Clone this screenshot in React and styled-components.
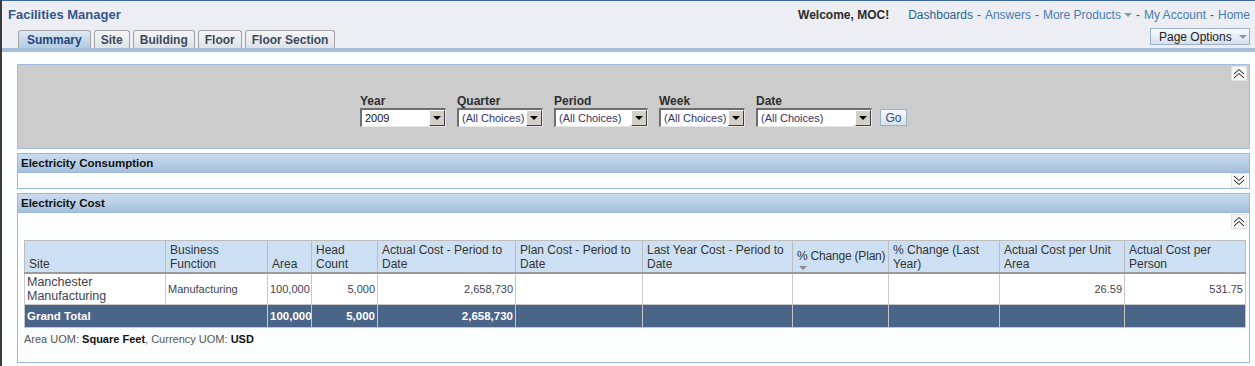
import React from "react";
import styled, { createGlobalStyle } from "styled-components";

const Global = createGlobalStyle`
  html, body { margin: 0; padding: 0; background: #fcfdfd; }
  body { font-family: "Liberation Sans", Arial, sans-serif; }
  * { box-sizing: border-box; }
`;

const Page = styled.div`
  width: 1255px;
  height: 366px;
  overflow: hidden;
  border-left: 2px solid #3c3c3c;
  background: #fcfdfd;
  display: flex;
  flex-direction: column;
`;

const Header = styled.div`
  height: 48px;
  background: #eceef3;
  border-top: 1px solid #3d6aa6;
  display: flex;
  justify-content: space-between;
  padding: 0 5px 0 6px;
`;

const HeaderLeft = styled.div`
  display: flex;
  flex-direction: column;
  justify-content: space-between;
`;

const Title = styled.div`
  font-weight: bold;
  font-size: 13px;
  color: #34558b;
  padding-top: 6px;
`;

const Tabs = styled.div`
  display: flex;
  gap: 3px;
  padding-left: 10px;
  align-items: flex-end;
`;

const Tab = styled.div`
  height: 18px;
  padding: 0 ${(p) => (p.$active ? 8 : 6)}px;
  border: 1px solid #a4a4a4;
  border-bottom: none;
  border-radius: 3px 3px 0 0;
  font-weight: bold;
  font-size: 12px;
  line-height: 18px;
  white-space: nowrap;
  color: ${(p) => (p.$active ? "#24447a" : "#3d4a5c")};
  background: ${(p) =>
    p.$active
      ? "linear-gradient(#dde8f3, #b3cbe2)"
      : "linear-gradient(#f5f6f8, #dfe2e6)"};
`;

const HeaderRight = styled.div`
  display: flex;
  flex-direction: column;
  align-items: flex-end;
  justify-content: space-between;
  padding-bottom: 3px;
  white-space: nowrap;
`;

const TopLine = styled.div`
  display: flex;
  align-items: center;
  padding-top: 7px;
  font-size: 12px;
`;

const Welcome = styled.span`
  font-weight: bold;
  font-size: 12px;
  color: #2b2b2b;
  margin-right: 19px;
`;

const Link = styled.span`
  color: ${(p) => (p.$dark ? "#2f6389" : "#4a7cae")};
`;

const Sep = styled.span`
  color: #555;
  padding: 0 4px;
`;

const Caret = styled.span`
  display: inline-block;
  width: 0;
  height: 0;
  border-left: 4px solid transparent;
  border-right: 4px solid transparent;
  border-top: 4px solid #8a99aa;
  margin-left: 3px;
`;

const PageOptions = styled.div`
  height: 17px;
  width: 100px;
  border: 1px solid #9bb0c8;
  background: linear-gradient(#fafcfe, #d3dfec);
  font-size: 12px;
  color: #222;
  padding-left: 8px;
  display: flex;
  align-items: center;
  gap: 4px;
  white-space: nowrap;
`;

const BlueBar = styled.div`
  height: 4px;
  background: #a3bfd9;
`;

const Content = styled.div`
  padding: 12px 5px 0 15px;
  display: flex;
  flex-direction: column;
  gap: 4px;
`;

const FilterPanel = styled.div`
  height: 85px;
  background: #cccccc;
  border: 1px solid #a0bddc;
  position: relative;
  display: flex;
  justify-content: center;
  align-items: flex-start;
  padding-top: 29px;
`;

const Filters = styled.div`
  display: flex;
  align-items: flex-end;
  gap: 11px;
`;

const Field = styled.div`
  display: flex;
  flex-direction: column;
`;

const Label = styled.div`
  font-weight: bold;
  font-size: 12px;
  line-height: 14px;
  color: #2e2e2e;
`;

const Select = styled.div`
  width: ${(p) => p.$w}px;
  height: 19px;
  background: #fff;
  border-top: 2px solid #6e6e6e;
  border-left: 2px solid #6e6e6e;
  border-right: 1px solid #e8e8e8;
  border-bottom: 1px solid #e8e8e8;
  display: flex;
  align-items: center;
  justify-content: space-between;
  font-size: 11px;
  white-space: nowrap;
  color: ${(p) => (p.$plain ? "#111" : "#3a3468")};
  padding-left: 3px;
`;

const DropBtn = styled.div`
  flex: none;
  width: 16px;
  height: 16px;
  background: #d4d0c8;
  border-top: 1px solid #fff;
  border-left: 1px solid #fff;
  border-right: 1px solid #404040;
  border-bottom: 1px solid #404040;
  display: flex;
  align-items: center;
  justify-content: center;
  &::after {
    content: "";
    border-left: 4px solid transparent;
    border-right: 4px solid transparent;
    border-top: 4px solid #000;
  }
`;

const GoBtn = styled.div`
  width: 27px;
  height: 17px;
  border: 1px solid #9ab0c6;
  background: linear-gradient(#f8fafc, #d6e1ec);
  font-size: 12px;
  color: #2d4f7a;
  display: flex;
  align-items: center;
  justify-content: center;
  margin-left: -3px;
  margin-bottom: 1px;
`;

const Collapse = styled.div`
  position: absolute;
  right: 2px;
  top: ${(p) => p.$top ?? 1}px;
  width: 16px;
  height: 15px;
  background: #f6f6f6;
  border: 1px solid #e2e2e2;
  display: flex;
  align-items: center;
  justify-content: center;
`;

const Section = styled.div`
  display: flex;
  flex-direction: column;
`;

const SectionHeader = styled.div`
  height: 20px;
  border: 1px solid #9cb8d6;
  background: linear-gradient(#c9dbee 0%, #bcd2e8 45%, #a3bfdc 100%);
  font-weight: bold;
  font-size: 11.5px;
  color: #111;
  padding-left: 3px;
  line-height: 18px;
`;

const SectionBody = styled.div`
  height: ${(p) => p.$h}px;
  border: 1px solid #9cb8d6;
  border-top: none;
  background: #fcfefe;
  position: relative;
  padding: ${(p) => (p.$h > 20 ? "27px 0 0 6px" : "0")};
`;

const Table = styled.table`
  border-collapse: collapse;
  table-layout: fixed;
  width: 1221px;
  font-size: 12px;
  border: 1px solid #a8a8a8;
`;

const Th = styled.th`
  background: #cde0f3;
  border: 1px solid #bdbdbd;
  border-bottom: 2px solid #9a9a9a;
  font-weight: normal;
  color: #333;
  text-align: left;
  vertical-align: bottom;
  height: 32px;
  padding: 1px 2px 1px 4px;
  line-height: 14px;
  white-space: ${(p) => (p.$nowrap ? "nowrap" : "normal")};
  letter-spacing: ${(p) => (p.$nowrap ? "-0.2px" : "0")};
`;

const Td = styled.td`
  border: 1px solid #c8c8c8;
  background: #fff;
  color: #3f3f52;
  height: 32px;
  padding: 1px 2px;
  line-height: 14px;
  font-size: ${(p) => (p.$big ? 12.5 : 11)}px;
  text-align: ${(p) => (p.$num ? "right" : "left")};
  vertical-align: middle;
`;

const TotalTd = styled.td`
  background: #4b6588;
  border: 1px solid #c8c8c8;
  color: #fff;
  font-weight: bold;
  font-size: 11.5px;
  height: 23px;
  padding: 1px 2px;
  white-space: nowrap;
  text-align: ${(p) => (p.$num ? "right" : "left")};
`;

const SortCaret = styled.span`
  display: block;
  width: 0;
  height: 0;
  border-left: 4px solid transparent;
  border-right: 4px solid transparent;
  border-top: 4px solid #8a8a8a;
  margin-top: 3px;
  margin-bottom: 1px;
  margin-left: 2px;
`;

const Note = styled.div`
  font-size: 11px;
  color: #555;
  margin-top: 5px;
  b { color: #111; }
`;

const Chevron = ({ up }) => (
  <svg width="12" height="11" viewBox="0 0 12 11">
    {up ? (
      <path d="M1 6 L6 1.5 L11 6 M1 10 L6 5.5 L11 10" fill="none" stroke="#111" strokeWidth="1" />
    ) : (
      <path d="M1 1 L6 5.5 L11 1 M1 5 L6 9.5 L11 5" fill="none" stroke="#111" strokeWidth="1" />
    )}
  </svg>
);

const cols = [141, 102, 44, 66, 138, 127, 150, 96, 111, 125, 121];

export default function App() {
  return (
    <>
      <Global />
      <Page>
        <Header>
          <HeaderLeft>
            <Title>Facilities Manager</Title>
            <Tabs>
              <Tab $active>Summary</Tab>
              <Tab>Site</Tab>
              <Tab>Building</Tab>
              <Tab>Floor</Tab>
              <Tab>Floor Section</Tab>
            </Tabs>
          </HeaderLeft>
          <HeaderRight>
            <TopLine>
              <Welcome>Welcome, MOC!</Welcome>
              <Link $dark>Dashboards</Link>
              <Sep>-</Sep>
              <Link>Answers</Link>
              <Sep>-</Sep>
              <Link>More Products</Link>
              <Caret />
              <Sep>-</Sep>
              <Link>My Account</Link>
              <Sep>-</Sep>
              <Link>Home</Link>
            </TopLine>
            <PageOptions>
              Page Options <Caret />
            </PageOptions>
          </HeaderRight>
        </Header>
        <BlueBar />
        <Content>
          <FilterPanel>
            <Collapse>
              <Chevron up />
            </Collapse>
            <Filters>
              <Field>
                <Label>Year</Label>
                <Select $w={86} $plain>
                  2009
                  <DropBtn />
                </Select>
              </Field>
              <Field>
                <Label>Quarter</Label>
                <Select $w={86}>
                  (All Choices)
                  <DropBtn />
                </Select>
              </Field>
              <Field>
                <Label>Period</Label>
                <Select $w={94}>
                  (All Choices)
                  <DropBtn />
                </Select>
              </Field>
              <Field>
                <Label>Week</Label>
                <Select $w={86}>
                  (All Choices)
                  <DropBtn />
                </Select>
              </Field>
              <Field>
                <Label>Date</Label>
                <Select $w={116}>
                  (All Choices)
                  <DropBtn />
                </Select>
              </Field>
              <GoBtn>Go</GoBtn>
            </Filters>
          </FilterPanel>

          <Section>
            <SectionHeader>Electricity Consumption</SectionHeader>
            <SectionBody $h={16}>
              <Collapse $top={0}>
                <Chevron />
              </Collapse>
            </SectionBody>
          </Section>

          <Section>
            <SectionHeader>Electricity Cost</SectionHeader>
            <SectionBody $h={150}>
              <Collapse $top={1}>
                <Chevron up />
              </Collapse>
              <Table>
                <colgroup>
                  {cols.map((w, i) => (
                    <col key={i} style={{ width: w }} />
                  ))}
                </colgroup>
                <thead>
                  <tr>
                    <Th>Site</Th>
                    <Th>Business Function</Th>
                    <Th>Area</Th>
                    <Th>Head Count</Th>
                    <Th>Actual Cost - Period to Date</Th>
                    <Th>Plan Cost - Period to Date</Th>
                    <Th>Last Year Cost - Period to Date</Th>
                    <Th $nowrap>
                      % Change (Plan)
                      <SortCaret />
                    </Th>
                    <Th>% Change (Last Year)</Th>
                    <Th>Actual Cost per Unit Area</Th>
                    <Th>Actual Cost per Person</Th>
                  </tr>
                </thead>
                <tbody>
                  <tr>
                    <Td $big>Manchester Manufacturing</Td>
                    <Td>Manufacturing</Td>
                    <Td $num>100,000</Td>
                    <Td $num>5,000</Td>
                    <Td $num>2,658,730</Td>
                    <Td />
                    <Td />
                    <Td />
                    <Td />
                    <Td $num>26.59</Td>
                    <Td $num>531.75</Td>
                  </tr>
                  <tr>
                    <TotalTd colSpan={2}>Grand Total</TotalTd>
                    <TotalTd $num>100,000</TotalTd>
                    <TotalTd $num>5,000</TotalTd>
                    <TotalTd $num>2,658,730</TotalTd>
                    <TotalTd />
                    <TotalTd />
                    <TotalTd />
                    <TotalTd />
                    <TotalTd />
                    <TotalTd />
                  </tr>
                </tbody>
              </Table>
              <Note>
                Area UOM: <b>Square Feet</b>, Currency UOM: <b>USD</b>
              </Note>
            </SectionBody>
          </Section>
        </Content>
      </Page>
    </>
  );
}
